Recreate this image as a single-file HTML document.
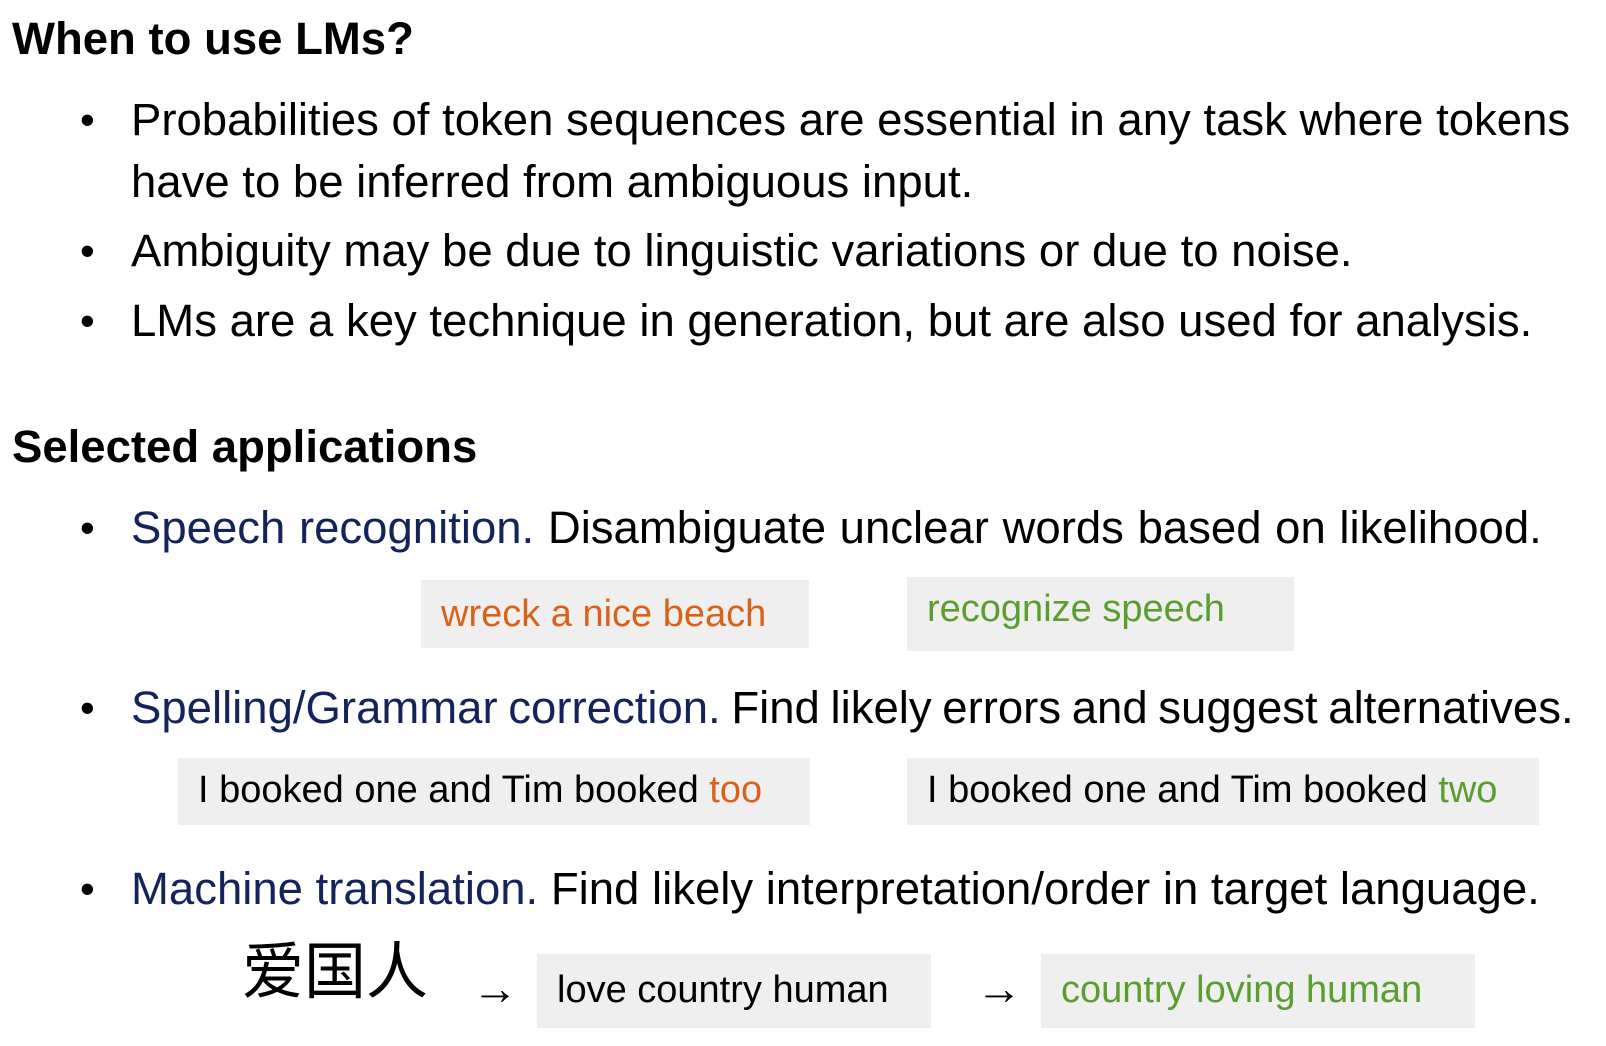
<!DOCTYPE html>
<html><head><meta charset="utf-8"><style>
body{margin:0;width:1606px;height:1046px;background:#fff;position:relative;overflow:hidden;font-family:"Liberation Sans","Noto Sans CJK SC",sans-serif;color:#000}
.t{position:absolute;white-space:nowrap;font-size:45.5px;line-height:44px}
.h{font-weight:bold;font-size:45.5px}
.b{position:absolute;font-size:42px;line-height:44px;left:80px}
.bl{color:#14235a}
.or{color:#d9621b}
.gr{color:#5a9e2f}
.box{position:absolute;background:#efefef;font-size:38px;line-height:38px;white-space:nowrap;box-sizing:border-box}
</style></head><body>
<div class="t h" style="left:12px;top:17px">When to use LMs?</div>
<div class="b" style="top:98px">•</div><div class="t" style="left:131px;top:98px">Probabilities of token sequences are essential in any task where tokens</div>
<div class="t" style="left:131px;top:160px">have to be inferred from ambiguous input.</div>
<div class="b" style="top:229px">•</div><div class="t" style="left:131px;top:229px">Ambiguity may be due to linguistic variations or due to noise.</div>
<div class="b" style="top:299px">•</div><div class="t" style="left:131px;top:299px">LMs are a key technique in generation, but are also used for analysis.</div>
<div class="t h" style="left:12px;top:425px">Selected applications</div>
<div class="b" style="top:506px">•</div><div class="t" style="left:131px;top:506px;word-spacing:1px"><span class="bl">Speech recognition.</span> Disambiguate unclear words based on likelihood.</div>
<div class="box or" style="left:421px;top:580px;width:388px;height:68px;padding:15px 0 0 20px">wreck a nice beach</div>
<div class="box gr" style="left:907px;top:577px;width:387px;height:74px;padding:13px 0 0 20px">recognize speech</div>
<div class="b" style="top:686px">•</div><div class="t" style="left:131px;top:686px;word-spacing:-2px"><span class="bl">Spelling/Grammar correction.</span> Find likely errors and suggest alternatives.</div>
<div class="box" style="left:178px;top:758px;width:632px;height:67px;padding:13px 0 0 20px">I booked one and Tim booked <span class="or">too</span></div>
<div class="box" style="left:907px;top:758px;width:632px;height:67px;padding:13px 0 0 20px">I booked one and Tim booked <span class="gr">two</span></div>
<div class="b" style="top:867px">•</div><div class="t" style="left:131px;top:867px"><span class="bl">Machine translation.</span> Find likely interpretation/order in target language.</div>
<div class="t" style="left:242px;top:942px;font-size:62px;line-height:62px">爱国人</div>
<div class="t" style="left:472px;top:966px;font-size:46px">→</div>
<div class="box" style="left:537px;top:954px;width:394px;height:74px;padding:17px 0 0 20px">love country human</div>
<div class="t" style="left:976px;top:966px;font-size:46px">→</div>
<div class="box gr" style="left:1041px;top:954px;width:434px;height:74px;padding:17px 0 0 20px">country loving human</div>
</body></html>
